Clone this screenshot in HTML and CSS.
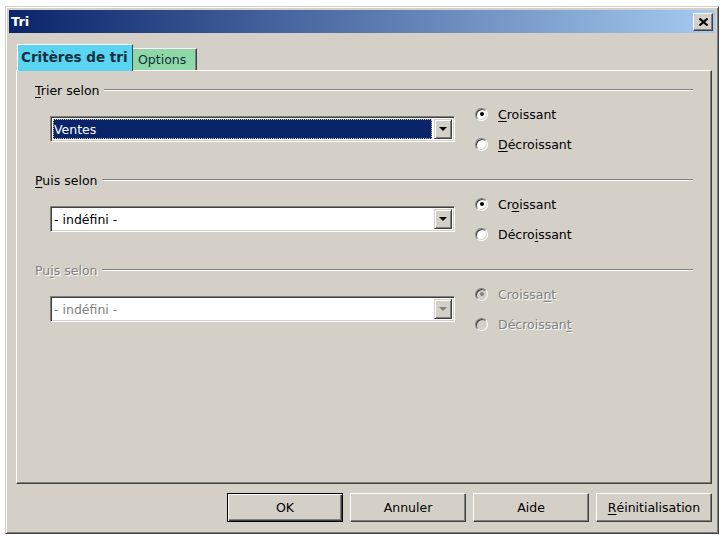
FILE: index.html
```html
<!DOCTYPE html>
<html>
<head>
<meta charset="utf-8">
<title>Tri</title>
<link rel="stylesheet" href="styles.css">
</head>
<body>
<div class="window">
  <div class="titlebar">
    <span class="title">Tri</span>
    <span class="close">
      <svg width="9" height="8" viewBox="0 0 9 8"><path d="M0.5 0.5 L8.5 7.5 M8.5 0.5 L0.5 7.5" stroke="#000" stroke-width="2"/></svg>
    </span>
  </div>
  <div class="content">
    <div class="tabs">
      <div class="tab active">Critères de tri</div>
      <div class="tab options">Options</div>
    </div>
    <div class="panel">
      <div class="group">
        <div class="legend"><span><u>T</u>rier selon</span><span class="rule"></span></div>
        <div class="row">
          <div class="combo"><span class="value selected">Ventes</span><span class="drop"><i></i></span></div>
          <div class="radios">
            <div class="radio"><span class="dot checked"></span><span><u>C</u>roissant</span></div>
            <div class="radio"><span class="dot"></span><span><u>D</u>écroissant</span></div>
          </div>
        </div>
      </div>
      <div class="group">
        <div class="legend"><span><u>P</u>uis selon</span><span class="rule"></span></div>
        <div class="row">
          <div class="combo"><span class="value">- indéfini -</span><span class="drop"><i></i></span></div>
          <div class="radios">
            <div class="radio"><span class="dot checked"></span><span>Cr<u>o</u>issant</span></div>
            <div class="radio"><span class="dot"></span><span>Décro<u>i</u>ssant</span></div>
          </div>
        </div>
      </div>
      <div class="group disabled">
        <div class="legend"><span>Pu<u>i</u>s selon</span><span class="rule"></span></div>
        <div class="row">
          <div class="combo"><span class="value">- indéfini -</span><span class="drop"><i></i></span></div>
          <div class="radios">
            <div class="radio"><span class="dot checked"></span><span>Croissa<u>n</u>t</span></div>
            <div class="radio"><span class="dot"></span><span>Décroissan<u>t</u></span></div>
          </div>
        </div>
      </div>
    </div>
    <div class="buttons">
      <div class="button default">OK</div>
      <div class="button">Annuler</div>
      <div class="button">Aide</div>
      <div class="button"><u>R</u>éinitialisation</div>
    </div>
  </div>
</div>
</body>
</html>
```
FILE: styles.css
```css
body {
  margin: 0;
  background: #fff;
  font-family: "DejaVu Sans", Tahoma, sans-serif;
  font-size: 12.5px;
  color: #000;
  }
u {
  text-decoration: underline;
  text-underline-offset: 2px;
  }
.window {
  box-sizing: border-box;
  width: 714px;
  height: 528px;
  margin: 6px 0 0 5px;
  padding: 3px;
  background: #d4d0c8;
  border: 1px solid;
  border-color: #d4d0c8 #404040 #404040 #d4d0c8;
  box-shadow: inset 1px 1px #fff, inset -1px -1px #808080;
  }
.titlebar {
  display: flex;
  align-items: center;
  justify-content: space-between;
  height: 23px;
  padding: 0 2px;
  background: linear-gradient(to right, #0a246a, #a6caf0);
  }
.title {
  color: #fff;
  font-weight: bold;
  font-size: 13px;
  }
.close {
  box-sizing: border-box;
  display: flex;
  align-items: center;
  justify-content: center;
  width: 20px;
  height: 18px;
  background: #d4d0c8;
  border: 1px solid;
  border-color: #fff #404040 #404040 #fff;
  box-shadow: inset -1px -1px #808080;
  }
.content {
  padding: 11px 3px 8px 7px;
  }
.tabs {
  display: flex;
  align-items: flex-end;
  height: 27px;
  margin-bottom: -1px;
  padding-left: 1px;
  position: relative;
  z-index: 1;
  }
.tab {
  box-sizing: border-box;
  display: flex;
  align-items: center;
  border-top: 1px solid #fff;
  border-left: 1px solid #fff;
  border-right: 1px solid #404040;
  color: #12303f;
  }
.tab.active {
  width: 116px;
  height: 27px;
  padding: 0 0 2px 3px;
  background: #5ad4f0;
  font-weight: bold;
  font-size: 13.5px;
  }
.tab.options {
  width: 64px;
  height: 22px;
  margin-bottom: 1px;
  padding-left: 5px;
  background: #8ed8a8;
  border-left: none;
  box-shadow: inset -1px 0 #808080;
  }
.panel {
  box-sizing: border-box;
  height: 414px;
  padding: 11px 18px 0 18px;
  border: 1px solid;
  border-color: #fff #404040 #404040 #fff;
  box-shadow: inset -1px -1px #808080;
  }
.group {
  margin-bottom: 13px;
  }
.legend {
  display: flex;
  align-items: center;
  height: 16px;
  }
.rule {
  flex: 1;
  height: 0;
  margin-left: 5px;
  border-top: 1px solid #808080;
  border-bottom: 1px solid #fff;
  }
.row {
  display: flex;
  align-items: flex-start;
  margin-top: 1px;
  }
.combo {
  box-sizing: border-box;
  display: flex;
  width: 405px;
  height: 26px;
  margin: 17px 0 0 15px;
  padding: 2px;
  background: #fff;
  border: 1px solid;
  border-color: #808080 #fff #fff #808080;
  box-shadow: inset 1px 1px #404040, inset -1px -1px #d4d0c8;
  }
.value {
  flex: 1;
  display: flex;
  align-items: center;
  padding-left: 1px;
  margin-right: 2px;
  }
.value.selected {
  background: #0a246a;
  color: #fff;
  outline: 1px dotted #c8c8c8;
  outline-offset: -1px;
  }
.drop {
  box-sizing: border-box;
  display: flex;
  align-items: center;
  justify-content: center;
  width: 18px;
  background: #d4d0c8;
  border: 1px solid;
  border-color: #d4d0c8 #404040 #404040 #d4d0c8;
  box-shadow: inset 1px 1px #fff, inset -1px -1px #808080;
  }
.drop i {
  width: 0;
  height: 0;
  border-left: 4px solid transparent;
  border-right: 4px solid transparent;
  border-top: 4px solid #000;
  }
.radios {
  margin-left: 20px;
  }
.radio {
  display: flex;
  align-items: center;
  height: 30px;
  }
.dot {
  box-sizing: border-box;
  position: relative;
  width: 13px;
  height: 13px;
  margin-right: 10px;
  border-radius: 50%;
  background: #fff;
  border: 1px solid;
  border-color: #808080 #fff #fff #808080;
  box-shadow: inset 1px 1px #404040, inset -1px -1px #d4d0c8;
  }
.dot.checked::after {
  content: "";
  position: absolute;
  left: 3.5px;
  top: 3.5px;
  width: 4px;
  height: 4px;
  border-radius: 50%;
  background: #000;
  }
.disabled .legend span:first-child,
.disabled .value,
.disabled .radio span:last-child {
  color: #808080;
  text-shadow: 1px 1px #fff;
  }
.disabled .value {
  text-shadow: none;
  }
.disabled .drop i {
  border-top-color: #808080;
  }
.disabled .dot {
  background: #d4d0c8;
  }
.disabled .dot.checked::after {
  background: #808080;
  }
.buttons {
  display: flex;
  justify-content: flex-end;
  gap: 7px;
  margin-top: 9px;
  }
.button {
  box-sizing: border-box;
  display: flex;
  align-items: center;
  justify-content: center;
  width: 116px;
  height: 29px;
  background: #d4d0c8;
  border: 1px solid;
  border-color: #fff #404040 #404040 #fff;
  box-shadow: inset -1px -1px #808080;
  }
.button.default {
  border-color: #000;
  box-shadow: inset 1px 1px #fff, inset -1px -1px #404040, inset -2px -2px #808080;
  }
```
